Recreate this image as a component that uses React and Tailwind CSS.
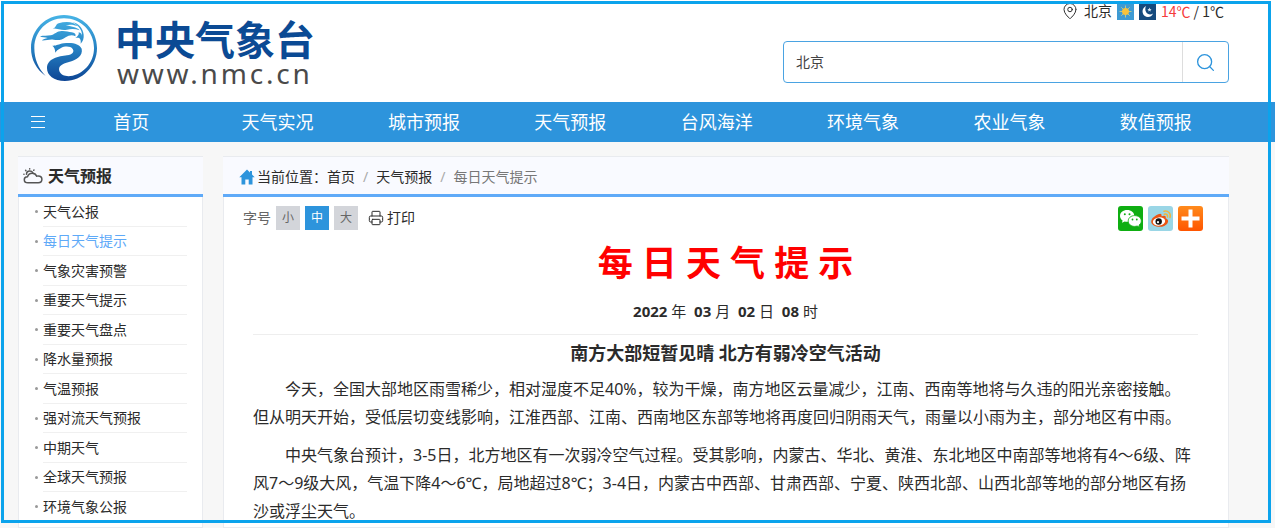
import React from 'react';
import { MapPin, Printer, Search } from 'lucide-react';

const NAV_ITEMS = ['首页', '天气实况', '城市预报', '天气预报', '台风海洋', '环境气象', '农业气象', '数值预报'];

const SIDE_ITEMS = [
  '天气公报',
  '每日天气提示',
  '气象灾害预警',
  '重要天气提示',
  '重要天气盘点',
  '降水量预报',
  '气温预报',
  '强对流天气预报',
  '中期天气',
  '全球天气预报',
  '环境气象公报',
];

const FONT_SIZES = ['小', '中', '大'];

const PARAGRAPHS = [
  '今天，全国大部地区雨雪稀少，相对湿度不足40%，较为干燥，南方地区云量减少，江南、西南等地将与久违的阳光亲密接触。但从明天开始，受低层切变线影响，江淮西部、江南、西南地区东部等地将再度回归阴雨天气，雨量以小雨为主，部分地区有中雨。',
  '中央气象台预计，3-5日，北方地区有一次弱冷空气过程。受其影响，内蒙古、华北、黄淮、东北地区中南部等地将有4～6级、阵风7～9级大风，气温下降4～6℃，局地超过8℃；3-4日，内蒙古中西部、甘肃西部、宁夏、陕西北部、山西北部等地的部分地区有扬沙或浮尘天气。',
];

const DragonLogo = () => (
  <svg viewBox="0 0 240 240" className="size-20 shrink-0" aria-hidden="true">
    <defs>
      <linearGradient id="dragon" x1="0" y1="15" x2="0" y2="213" gradientUnits="userSpaceOnUse">
        <stop offset="0" stopColor="#47b4e6" />
        <stop offset="0.5" stopColor="#2682c4" />
        <stop offset="1" stopColor="#0d4594" />
      </linearGradient>
    </defs>
    <g fill="url(#dragon)">
      {/* ring and body */}
      <path d="M62 198C34 178 18 149 18 114C18 59 62 15 117 15C172 15 216 59 216 114C216 169 172 213 120 213C86 213 66 196 66 175C66 145 101 139 126 136C142 134 149 125 143 117C137 108 119 108 108 114C98 119 94 123 91 128C90 117 88 111 82 107C94 108 99 103 116 100C140 96 164 101 170 116C175 138 152 150 132 156C110 162 99 168 103 183C108 197 126 201 143 197C181 188 207 154 207 114C207 64 167 25 117 25C67 25 28 64 28 114C28 147 40 175 62 198Z" />
      {/* snout and jaw */}
      <path d="M45 79C56 76 66 78 77 76C89 74 92 66 105 64C118 61 130 66 140 67C149 68 154 73 151 79C143 74 132 75 122 82C110 92 96 91 86 89C74 87 62 92 50 91C54 88 60 86 68 84C60 82 50 83 45 79Z" />
      {/* horns and mane */}
      <path d="M83 55C94 55 90 44 101 40C122 33 146 34 159 49C146 43 132 43 122 46C137 49 155 51 164 61C151 56 138 56 126 59C113 62 101 57 83 55Z" />
      <path d="M142 36C160 40 174 53 176 74C177 84 174 94 167 101C169 86 163 81 151 84C158 79 163 74 161 67C168 68 170 72 171 77C172 60 160 46 142 36Z" />
    </g>
  </svg>
);

const CloudIcon = () => (
  <svg
    viewBox="0 0 20 16"
    className="h-4 w-5"
    fill="none"
    stroke="#555"
    strokeWidth="1.500"
    strokeLinecap="round"
    strokeLinejoin="round"
    aria-hidden="true"
  >
    <path d="M5 14.800C2.800 14.800 1.300 13.500 1.300 11.700C1.300 10 2.700 8.700 4.500 8.700C5.200 6.500 7 5.200 9.200 5.200C11.300 5.200 13 6.400 13.700 8.200C14.100 8 14.600 7.900 15.200 7.900C17.300 7.900 18.900 9.400 18.900 11.300C18.900 13.300 17.400 14.800 15.300 14.800Z" />
    <path d="M3.500 6.300C3.500 4.300 5 3 6.800 3C8.200 3 9.200 3.600 9.800 4.600" />
    <path d="M6.700 .8V.9M2.600 2.300l.3.3M.9 6.200H1M10.700 2.300l.3-.3" />
  </svg>
);

const SunIcon = () => (
  <svg viewBox="0 0 17 17" className="size-[17px]" role="img" aria-label="晴">
    <rect width="17" height="17" fill="#3d9ad3" />
    <path
      d="M8.500 2.500v12M2.500 8.500h12M4.300 4.300l8.400 8.400M12.700 4.300l-8.400 8.400"
      stroke="#b9c98e"
      strokeWidth="1"
    />
    <circle cx="8.500" cy="8.500" r="3.500" fill="#f8c23a" />
  </svg>
);

const MoonIcon = () => (
  <svg viewBox="0 0 17 17" className="size-[17px]" role="img" aria-label="晴夜">
    <rect width="17" height="17" fill="#154a7d" />
    <path
      d="M7 3C3 5 2.500 10 5.500 12.800C8.500 15.300 12.800 14 14 10.500C11.500 12.300 8.500 11.500 7.200 9.300C6 7.200 6 5 7 3Z"
      fill="#fff"
    />
    <path d="M10.500 4.500l.6 1.400 1.500.1-1.100 1 .3 1.400-1.300-.7-1.300.7.3-1.400-1.100-1 1.500-.1z" fill="#d6e4f0" />
  </svg>
);

const HomeIcon = () => (
  <svg viewBox="0 0 16 16" className="size-4" aria-hidden="true">
    <path d="M8 .5L.3 8.300H2.500V15.500H6.300V10.500H9.700V15.500H13.500V8.300H15.700L13 5.500V2H11V3.500Z" fill="#2d94dc" />
  </svg>
);

const WechatIcon = () => (
  <svg viewBox="0 0 25 25" className="size-[25px]" aria-hidden="true">
    <rect width="25" height="25" rx="3" fill="#0fae12" />
    <path
      d="M9.200 4C5 4 2 6.500 2 9.900C2 11.800 3 13.400 4.600 14.500L4 16.800L6.700 15.400C7.500 15.600 8.300 15.700 9.200 15.700C13.200 15.700 16.300 13.200 16.300 9.900C16.300 6.500 13.200 4 9.200 4Z"
      fill="#fff"
    />
    <path
      d="M16.600 9.600C20.500 9.600 23.300 12 23.300 15C23.300 16.700 22.400 18.100 21 19.100L21.500 21.200L19.200 20C18.400 20.200 17.500 20.400 16.600 20.400C12.900 20.400 10.200 18 10.200 15C10.200 12 12.900 9.600 16.600 9.600Z"
      fill="#fff"
      stroke="#0fae12"
      strokeWidth=".8"
    />
    <g fill="#0fae12">
      <circle cx="6.800" cy="8.300" r="1" />
      <circle cx="11.500" cy="8.300" r="1" />
      <circle cx="14.500" cy="13.500" r=".9" />
      <circle cx="18.800" cy="13.500" r=".9" />
    </g>
  </svg>
);

const WeiboIcon = () => (
  <svg viewBox="0 0 25 25" className="size-[25px]" aria-hidden="true">
    <rect width="25" height="25" rx="3" fill="#9ad6e6" />
    <path
      d="M10.300 8.300C13 6.800 14 8.500 13.500 10.200C17 9 18.500 10 17.600 12.300C20 13 20.800 15 19.500 17.200C17.500 20.500 12.500 21.500 8.500 20.400C4.500 19.400 2.500 17 3.500 13.900C4.500 11.400 7.500 9.700 10.300 8.300Z"
      fill="#ea5514"
    />
    <ellipse cx="11" cy="15.500" rx="6.200" ry="4.100" fill="#fff" transform="rotate(-8 11 15.500)" />
    <circle cx="10.700" cy="15.500" r="3.200" fill="#111" />
    <circle cx="10" cy="16.200" r="1.100" fill="#fff" />
    <path
      d="M16 5.200C20 4.200 23.300 7.500 22 11.600M16.300 8.200C18.500 7.600 20 9 19.500 11"
      fill="none"
      stroke="#f2b53c"
      strokeWidth="1.500"
      strokeLinecap="round"
    />
  </svg>
);

const MoreIcon = () => (
  <svg viewBox="0 0 25 25" className="size-[25px]" aria-hidden="true">
    <defs>
      <linearGradient id="more" x1="0" y1="0" x2="0" y2="1">
        <stop offset="0" stopColor="#ff8a1c" />
        <stop offset="1" stopColor="#ff5500" />
      </linearGradient>
    </defs>
    <rect width="25" height="25" rx="3" fill="url(#more)" />
    <path d="M12.500 3.500V21.500M3.500 12.500H21.500" stroke="#fff" strokeWidth="4" />
  </svg>
);

const Header = () => (
  <header className="flex h-[102px] justify-between bg-white pr-[46px] pl-[25px]">
    <a href="#home" className="flex items-start pt-[10px]">
      <DragonLogo />
      <div className="pt-[10px] pl-[10px]">
        <div className="text-[40px] leading-10 font-bold text-[#0b4a94]">中央气象台</div>
        <div className="pl-[2px] text-[28px] leading-[26px] tracking-widest text-[#4a4a4a]">www.nmc.cn</div>
      </div>
    </a>
    <div className="flex w-[446px] flex-col">
      <div className="flex h-[22px] items-center justify-end gap-[5px] pr-[5px] text-sm">
        <MapPin size={18} strokeWidth={1.3} />
        <span>北京</span>
        <SunIcon />
        <MoonIcon />
        <span className="font-['Noto_Sans_CJK_SC',sans-serif]">
          <span className="text-[#f53b3b]">14℃</span> / 1℃
        </span>
      </div>
      <form className="mt-[19px] flex h-[42px] overflow-hidden rounded border border-[#4aa3e2]">
        <input
          type="text"
          aria-label="城市"
          defaultValue="北京"
          className="min-w-0 flex-1 px-3 text-sm text-[#444] outline-none"
        />
        <button
          type="button"
          aria-label="搜索"
          className="flex w-[46px] items-center justify-center border-l border-[#ddd] text-[#2d94dc]"
        >
          <Search size={21} strokeWidth={1.5} />
        </button>
      </form>
    </div>
  </header>
);

const NavBar = () => (
  <nav className="flex h-10 items-center bg-[#2d94dc] pr-[46px] pl-[18px] text-lg text-white">
    <button type="button" aria-label="菜单" className="flex w-10 justify-center">
      <svg viewBox="0 0 14 12" className="h-3 w-[14px]" aria-hidden="true">
        <path d="M0 .5H14M0 5.500H14M0 11.500H14" stroke="#fff" />
      </svg>
    </button>
    {NAV_ITEMS.map(item => (
      <a key={item} href="#nav" className="flex-1 text-center">
        {item}
      </a>
    ))}
  </nav>
);

const Sidebar = () => (
  <aside className="w-[185px] shrink-0 border border-[#e9ebef] bg-white">
    <h2 className="-mx-px flex h-10 items-center gap-[5px] border-b-3 border-[#5faaf8] bg-[#f9faff] pl-[5px] text-base font-bold">
      <CloudIcon />
      天气预报
    </h2>
    <ul className="pr-[15px] pl-6 text-sm">
      {SIDE_ITEMS.map(item => (
        <li
          key={item}
          className="flex items-center border-b border-[#f0f0f0] odd:h-[30px] even:h-[29px] before:-ml-2 before:mr-[5px] before:size-[3px] before:rounded-full before:bg-[#999]"
        >
          <a href="#side" className={item === '每日天气提示' ? 'text-[#5faaf8]' : ''}>
            {item}
          </a>
        </li>
      ))}
    </ul>
  </aside>
);

const Toolbar = () => (
  <div className="flex h-6 items-center justify-between pr-[11px] pl-[5px] text-sm">
    <div className="flex items-center gap-[5px]">
      <span className="text-[#666]">字号</span>
      {FONT_SIZES.map(size => (
        <button
          key={size}
          type="button"
          className={`size-6 text-xs ${size === '中' ? 'bg-[#2d94dc] text-white' : 'bg-[#d3d5da] text-[#666]'}`}
        >
          {size}
        </button>
      ))}
      <button type="button" className="ml-[5px] flex items-center gap-[3px]">
        <Printer size={16} strokeWidth={1.5} />
        打印
      </button>
    </div>
    <div className="flex gap-[5px]">
      <button type="button" aria-label="分享到微信">
        <WechatIcon />
      </button>
      <button type="button" aria-label="分享到微博">
        <WeiboIcon />
      </button>
      <button type="button" aria-label="更多">
        <MoreIcon />
      </button>
    </div>
  </div>
);

const Article = () => (
  <main className="min-w-0 flex-1 border border-[#e9ebef] bg-white">
    <div className="-mx-px flex h-10 items-center border-b-3 border-[#5faaf8] bg-[#f9faff] pt-[3px] pl-4 text-sm">
      <HomeIcon />
      <span className="pl-[2px]">当前位置：</span>
      <a href="#home">首页</a>
      <span className="px-2 text-[#aaa]">/</span>
      <a href="#forecast">天气预报</a>
      <span className="px-2 text-[#aaa]">/</span>
      <span className="text-[#777]">每日天气提示</span>
    </div>
    <div className="px-[14px] pt-[9px]">
      <Toolbar />
    </div>
    <article className="pr-[30px] pl-[29px]">
      <div className="border-b border-[#eee] text-center">
        <h1 className="pt-2 text-[35px] leading-[50px] font-bold text-[#f00]">每 日 天 气 提 示</h1>
        <p className="pt-[13px] pb-[13px] text-[15px] leading-5">
          <b>2022</b> 年&nbsp; <b>03</b> 月&nbsp; <b>02</b> 日&nbsp; <b>08</b> 时
        </p>
      </div>
      <h2 className="pt-1 text-center text-lg leading-7 font-bold">南方大部短暂见晴 北方有弱冷空气活动</h2>
      {PARAGRAPHS.map(text => (
        <p key={text} className="pt-2 pr-[5px] pb-[2px] indent-[2em] text-base leading-7">
          {text}
        </p>
      ))}
    </article>
  </main>
);

const App = () => (
  <div
    lang="zh-CN"
    className="relative flex h-screen flex-col overflow-hidden bg-[#f7f7f7] font-['Noto_Sans','Noto_Sans_CJK_SC',sans-serif] text-[#2b2b2b]"
  >
    <Header />
    <NavBar />
    <div className="flex flex-1 gap-5 pt-[14px] pr-[46px] pl-[18px]">
      <Sidebar />
      <Article />
    </div>
    <div className="pointer-events-none absolute top-px right-1 bottom-[5px] left-px border-3 border-[#0ba3ec]" />
  </div>
);

export default App;
